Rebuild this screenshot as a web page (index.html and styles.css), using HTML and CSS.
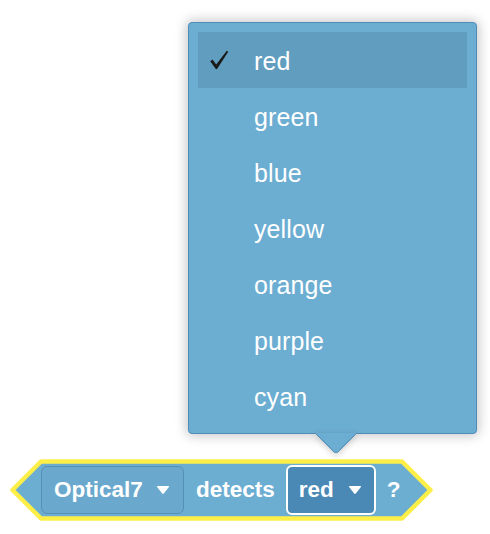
FILE: index.html
```html
<!DOCTYPE html>
<html>
<head>
<meta charset="utf-8">
<link rel="stylesheet" href="styles.css">
</head>
<body>
<div class="stage">
  <div class="menu">
    <div class="item selected">
      <svg class="check" width="20" height="20" viewBox="0 0 20 20"><path d="M1.2 11.2 L3.6 9.6 L7.2 14.6 L17.8 0.8 L19.2 1.8 L8.4 18.6 Q7.4 19.9 6.4 18.6 Z" fill="#1a1a1a"/></svg>
      <span>red</span>
    </div>
    <div class="item"><span>green</span></div>
    <div class="item"><span>blue</span></div>
    <div class="item"><span>yellow</span></div>
    <div class="item"><span>orange</span></div>
    <div class="item"><span>purple</span></div>
    <div class="item"><span>cyan</span></div>
    <div class="pointer"><div class="pointer-tip"></div></div>
  </div>

  <div class="block">
    <svg class="shape" width="424" height="62" viewBox="0 0 424 62">
      <path d="M2.5 31 L31 2.5 L392 2.5 L420.5 31 L392 59.5 L31 59.5 Z" fill="#6cadd2" stroke="#fdef48" stroke-width="4.5" stroke-linejoin="round"/>
    </svg>
    <div class="row">
      <div class="field sensor">
        <span>Optical7</span>
        <svg class="tri" width="14" height="10" viewBox="0 0 14 10"><path d="M1.6 1 L12.4 1 Q13.6 1 12.9 2 L7.8 8.6 Q7 9.5 6.2 8.6 L1.1 2 Q0.4 1 1.6 1 Z" fill="#fff"/></svg>
      </div>
      <span class="label">detects</span>
      <div class="field color">
        <span>red</span>
        <svg class="tri" width="14" height="10" viewBox="0 0 14 10"><path d="M1.6 1 L12.4 1 Q13.6 1 12.9 2 L7.8 8.6 Q7 9.5 6.2 8.6 L1.1 2 Q0.4 1 1.6 1 Z" fill="#fff"/></svg>
      </div>
      <span class="label q">?</span>
    </div>
  </div>
</div>
</body>
</html>
```
FILE: styles.css
```css
html, body {
  margin: 0;
  padding: 0;
  background: #ffffff;
}
body {
  width: 490px;
  height: 534px;
  overflow: hidden;
  font-family: "Liberation Sans", Arial, Helvetica, sans-serif;
}
.stage {
  position: relative;
  width: 490px;
  height: 534px;
  padding-top: 459px;
  padding-left: 10px;
  box-sizing: border-box;
}

/* dropdown menu (overlay) */
.menu {
  position: absolute;
  left: 188px;
  top: 22px;
  width: 269px;
  padding: 9px;
  background: #6cadd2;
  border: 1px solid #4f8cb6;
  border-radius: 4px;
  box-shadow: 0 0 12px 2px rgba(0, 0, 0, 0.22);
  z-index: 2;
}
.item {
  position: relative;
  height: 56px;
  display: flex;
  align-items: center;
  padding-left: 56px;
  color: #ffffff;
  font-size: 25px;
  letter-spacing: 0.1px;
}
.item span {
  position: relative;
  top: 1px;
}
.item.selected {
  background: #609dbf;
}
.check {
  position: absolute;
  left: 11px;
  top: 18px;
}
.pointer {
  position: absolute;
  left: 122px;
  top: 100%;
  width: 50px;
  height: 21px;
  overflow: hidden;
  filter: drop-shadow(0 2px 3px rgba(0, 0, 0, 0.2));
}
.pointer-tip {
  position: absolute;
  left: 9px;
  top: -17px;
  width: 31px;
  height: 31px;
  background: #6cadd2;
  border-right: 1px solid #4f8cb6;
  border-bottom: 1px solid #4f8cb6;
  border-bottom-right-radius: 4px;
  transform: rotate(45deg);
}

/* block */
.block {
  position: relative;
  width: 424px;
  height: 62px;
}
.shape {
  position: absolute;
  left: 0;
  top: 0;
}
.row {
  position: relative;
  display: flex;
  align-items: center;
  height: 62px;
  padding-left: 31px;
  color: #ffffff;
  font-weight: bold;
  font-size: 22.5px;
}
.field {
  display: flex;
  align-items: center;
  box-sizing: border-box;
  border-radius: 6px;
}
.sensor {
  width: 143px;
  height: 48px;
  padding-left: 12px;
  background: #6aa9cd;
  border: 1px solid #5690b8;
}
.sensor .tri {
  margin-left: 13px;
}
.label {
  margin-left: 12px;
}
.color {
  margin-left: 11px;
  width: 90px;
  height: 50px;
  padding-left: 11px;
  background: #4a89b5;
  border: 2px solid #ffffff;
}
.color .tri {
  margin-left: 14px;
}
.q {
  margin-left: 11px;
}
```
